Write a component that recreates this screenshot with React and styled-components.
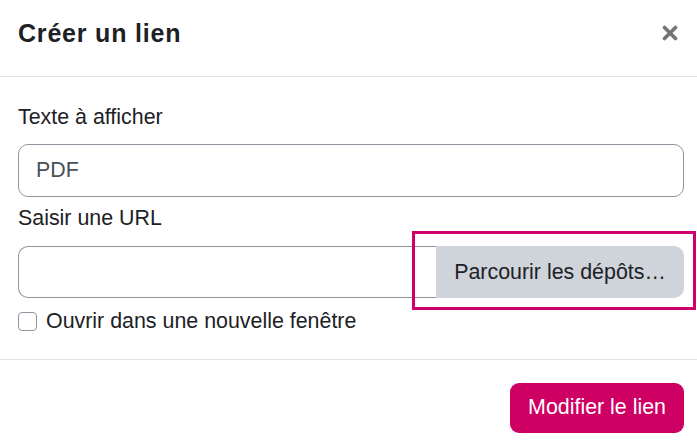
import React from 'react';
import styled, { createGlobalStyle } from 'styled-components';

const GlobalStyle = createGlobalStyle`
    body {
        margin: 0;
        background: #fff;
        font-family: "Liberation Sans", Arial, sans-serif;
        color: #1d2125;
    }
`;

const Modal = styled.div`
    width: 697px;
    height: 444px;
    background: #fff;
    overflow: hidden;
`;

const Header = styled.div`
    display: flex;
    align-items: center;
    justify-content: space-between;
    height: 77px;
    padding: 0 19px 0 18px;
    box-sizing: border-box;
    border-bottom: 1px solid #dee2e6;
`;

const Title = styled.h5`
    margin: 0;
    margin-top: -10px;
    font-size: 25px;
    font-weight: 700;
    letter-spacing: 0.8px;
    color: #1d2125;
`;

const Close = styled.button`
    display: flex;
    border: none;
    background: none;
    padding: 0;
    margin-top: -10px;
    cursor: pointer;
`;

const Body = styled.div`
    padding: 25px 13px 21px 18px;
    border-bottom: 1px solid #dee2e6;
`;

const Label = styled.label`
    display: block;
    font-size: 21.4px;
    line-height: 31.5px;
    margin-bottom: ${p => p.$gap}px;
`;

const TextInput = styled.input`
    display: block;
    width: 100%;
    box-sizing: border-box;
    height: 53px;
    padding: 0 17px;
    font: inherit;
    font-size: 21.4px;
    color: #495057;
    border: 1px solid #8f959e;
    border-radius: 10px;
    margin-bottom: 6px;
    outline: none;
`;

const UrlRow = styled.div`
    display: flex;
    height: 52px;
    margin-bottom: 8px;
`;

const UrlInput = styled(TextInput)`
    flex: 1;
    height: 100%;
    margin: 0;
    border-right: none;
    border-radius: 10px 0 0 10px;
`;

const BrowseWrap = styled.div`
    position: relative;
    display: flex;
`;

const Browse = styled.button`
    height: 100%;
    width: 248px;
    padding: 0;
    border: none;
    border-radius: 0 10px 10px 0;
    background: #ced4da;
    font-family: inherit;
    font-size: 21.4px;
    color: #1d2125;
`;

const Highlight = styled.div`
    position: absolute;
    top: -15px;
    left: -24px;
    right: -12px;
    bottom: -12px;
    border: 3px solid #d0006a;
    pointer-events: none;
`;

const CheckRow = styled.label`
    display: flex;
    align-items: center;
    gap: 9px;
    font-size: 21.4px;
    line-height: 31.5px;
`;

const Box = styled.span`
    width: 17px;
    height: 17px;
    border: 1px solid #8f959e;
    border-radius: 4px;
    background: #fff;
    margin-top: -1px;
`;

const Footer = styled.div`
    display: flex;
    justify-content: flex-end;
    padding: 23px 13px 0 18px;
`;

const Primary = styled.button`
    height: 50px;
    padding: 0 18px;
    border: none;
    border-radius: 9px;
    background: #ce0064;
    color: #fff;
    font-family: inherit;
    font-size: 21.4px;
`;

const App = () => (
    <>
        <GlobalStyle />
        <Modal>
            <Header>
                <Title>Créer un lien</Title>
                <Close aria-label="Fermer">
                    <svg width="16" height="16" viewBox="0 0 16 16">
                        <path d="M2.5 2.5 L13.5 13.5 M13.5 2.5 L2.5 13.5" stroke="#747474" strokeWidth="3.6" strokeLinecap="round" />
                    </svg>
                </Close>
            </Header>
            <Body>
                <Label $gap={10}>Texte à afficher</Label>
                <TextInput defaultValue="PDF" />
                <Label $gap={12}>Saisir une URL</Label>
                <UrlRow>
                    <UrlInput />
                    <BrowseWrap>
                        <Browse>Parcourir les dépôts…</Browse>
                        <Highlight />
                    </BrowseWrap>
                </UrlRow>
                <CheckRow>
                    <Box />
                    Ouvrir dans une nouvelle fenêtre
                </CheckRow>
            </Body>
            <Footer>
                <Primary>Modifier le lien</Primary>
            </Footer>
        </Modal>
    </>
);

export default App;
